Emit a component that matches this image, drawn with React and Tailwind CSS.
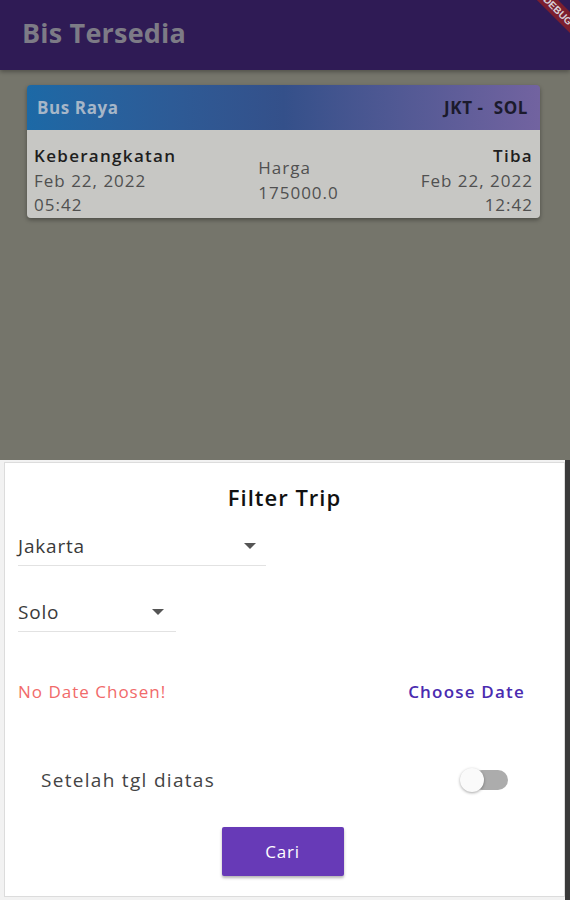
import React from "react";

export default function App() {
  return (
    <div className="relative w-[570px] h-[900px] overflow-hidden bg-[#75756b] flex flex-col" style={{ fontFamily: "'Open Sans', 'Noto Sans', sans-serif" }}>
      {/* App bar */}
      <div className="h-[70px] bg-[#2f1b55] flex items-center pl-[22px] pb-[4px] shadow-[0_2px_4px_rgba(0,0,0,0.3)] shrink-0">
        <span className="text-[27px] font-bold text-[#7d7b86] tracking-[0.2px]">Bis Tersedia</span>
      </div>
      {/* Debug ribbon */}
      <div className="absolute top-[3px] right-[-33px] w-[90px] h-[15px] bg-[#7c1f2f] rotate-45 flex items-center justify-center">
        <span className="text-[10px] font-bold text-[#d8d0d8] leading-none" style={{ fontFamily: "'Liberation Sans', sans-serif" }}>DEBUG</span>
      </div>

      {/* Card */}
      <div className="mx-[27px] mt-[15px] w-[513px] rounded-[4px] overflow-hidden shadow-[0_2px_4px_rgba(0,0,0,0.35)] shrink-0">
        <div className="h-[45px] bg-gradient-to-r from-[#1c69a6] via-[#34508a] to-[#7263a0] flex items-center justify-between px-[10px]">
          <span className="text-[17px] font-bold text-[#a6b6c8] tracking-[0.6px]">Bus Raya</span>
          <span className="text-[17px] font-bold text-[#1b1a2c] pr-[2px] tracking-[0.6px]">JKT -&nbsp; SOL</span>
        </div>
        <div className="h-[88px] bg-[#c7c7c4] flex justify-between px-[7px] pt-[14px] text-[17px] leading-[24.5px] text-[#505050] tracking-[1px]">
          <div className="flex flex-col">
            <span className="font-semibold text-[#1e1e1e] tracking-[1.3px]">Keberangkatan</span>
            <span>Feb 22, 2022</span>
            <span>05:42</span>
          </div>
          <div className="flex flex-col pt-[12px]">
            <span>Harga</span>
            <span>175000.0</span>
          </div>
          <div className="flex flex-col items-end">
            <span className="font-semibold text-[#1e1e1e] tracking-[1.3px]">Tiba</span>
            <span>Feb 22, 2022</span>
            <span>12:42</span>
          </div>
        </div>
      </div>

      <div className="flex-1" />

      {/* Bottom sheet */}
      <div className="h-[440px] bg-[#f2f2f2] flex shrink-0">
        <div className="ml-[4px] mt-[2px] mb-[3px] w-[561px] bg-white border border-[#dcdcdc] flex flex-col">
          <div className="text-center text-[22px] font-semibold text-[#111] mt-[20px] leading-[28px] tracking-[1px]">Filter Trip</div>

          <div className="ml-[13px] mt-[15px] w-[248px] h-[40px] border-b border-[#e2e2e2] flex items-center justify-between pr-[10px] shrink-0">
            <span className="text-[19px] text-[#3a3a3a] leading-[28px] tracking-[0.8px]">Jakarta</span>
            <svg width="12" height="6" viewBox="0 0 12 6"><path d="M0 0 L12 0 L6 6 Z" fill="#555" /></svg>
          </div>

          <div className="ml-[13px] mt-[26px] w-[158px] h-[40px] border-b border-[#e2e2e2] flex items-center justify-between pr-[12px] shrink-0">
            <span className="text-[19px] text-[#3a3a3a] leading-[28px] tracking-[0.8px]">Solo</span>
            <svg width="12" height="6" viewBox="0 0 12 6"><path d="M0 0 L12 0 L6 6 Z" fill="#555" /></svg>
          </div>

          <div className="mt-[48px] h-[24px] flex items-center justify-between pl-[13px] pr-[39px] shrink-0">
            <span className="text-[17px] text-[#f16a6a] leading-[24px] tracking-[1px]">No Date Chosen!</span>
            <span className="text-[17px] font-semibold text-[#4a2bb0] leading-[24px] tracking-[1.2px]">Choose Date</span>
          </div>

          <div className="mt-[62px] h-[28px] flex items-center justify-between pl-[36px] pr-[56px] shrink-0">
            <span className="text-[19px] text-[#444] leading-[28px] tracking-[1.3px]">Setelah tgl diatas</span>
            <div className="relative w-[48px] h-[24px] flex items-center">
              <div className="ml-[12px] w-[36px] h-[20px] rounded-full bg-[#acacac]" />
              <div className="absolute left-0 top-0 w-[24px] h-[24px] rounded-full bg-[#fafafa] shadow-[0_1px_3px_rgba(0,0,0,0.35)]" />
            </div>
          </div>

          <div className="mt-[33px] flex justify-center pr-[4px] shrink-0">
            <button className="w-[122px] h-[49px] bg-[#673ab7] rounded-[2px] text-white text-[17px] tracking-[0.8px] shadow-[0_2px_3px_rgba(0,0,0,0.3)]">Cari</button>
          </div>
        </div>
        <div className="w-[5px] bg-[#3a3a3a]" />
      </div>
    </div>
  );
}
